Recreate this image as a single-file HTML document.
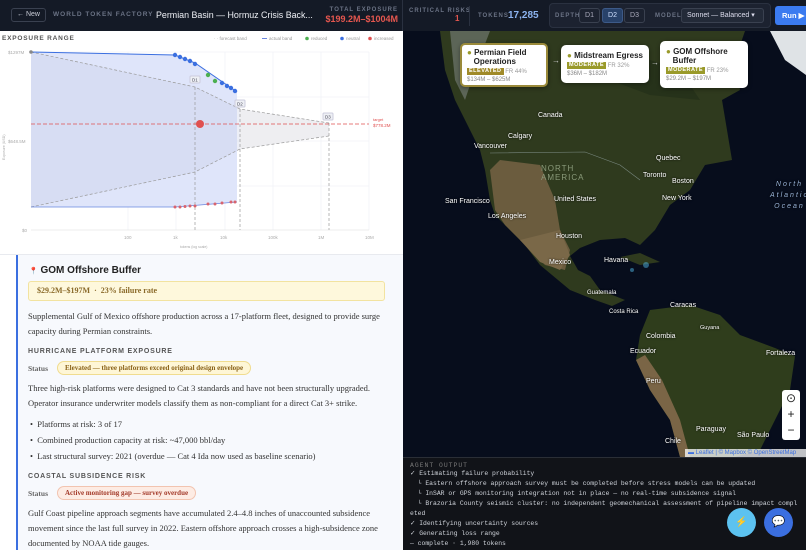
<!DOCTYPE html><html><head><meta charset="utf-8"><style>
*{margin:0;padding:0;box-sizing:border-box}
body{width:806px;height:550px;overflow:hidden;font-family:"Liberation Sans",sans-serif;background:#fff;position:relative}
.hdr{position:absolute;left:0;top:0;width:806px;height:31px;background:#141a26;color:#fff}
.abs{position:absolute;white-space:nowrap}
.lbl{font-size:6px;letter-spacing:1px;color:#6b7385;font-weight:bold}
.serif{font-family:"Liberation Serif",serif}
.mono{font-family:"Liberation Mono",monospace}
.card{position:absolute;background:#fff;border-radius:5px;box-shadow:0 1px 4px rgba(0,0,0,.4);color:#222}
.card .t{font-size:8px;font-weight:bold;line-height:9px}
.tag{display:inline-block;background:#9a9a2a;color:#fff;font-size:5.5px;font-weight:bold;padding:0 2px;letter-spacing:.5px;line-height:7px;vertical-align:middle}
.maplbl{position:absolute;color:#fff;font-size:7px;text-shadow:0 0 2px #000;white-space:nowrap}
</style></head><body>
<div class="hdr">
 <div class="abs" style="left:11px;top:8px;width:35px;height:14px;border:1px solid #3a4150;border-radius:3px;font-size:7px;color:#c8ccd6;text-align:center;line-height:12px">← New</div>
 <div class="abs" style="left:53px;top:11px;font-size:6.5px;letter-spacing:1px;color:#6b7385;font-weight:bold">WORLD TOKEN FACTORY</div>
 <div class="abs" style="left:156px;top:10px;font-size:8.9px;color:#eef0f5">Permian Basin — Hormuz Crisis Back...</div>
 <div class="abs lbl" style="right:408px;top:7px">TOTAL EXPOSURE</div>
 <div class="abs" style="right:408px;top:14px;font-size:9px;color:#e5574f;font-weight:bold">$199.2M–$1004M</div>
 <div class="abs" style="left:402px;top:0;width:1px;height:31px;background:#2a3140"></div>
 <div class="abs lbl" style="left:409px;top:8px">CRITICAL RISKS</div>
 <div class="abs" style="left:455px;top:14px;font-size:8px;color:#e5574f;font-weight:bold">1</div>
 <div class="abs" style="left:469px;top:6px;width:1px;height:20px;background:#2a3140"></div>
 <div class="abs lbl" style="left:478px;top:13px">TOKENS</div>
 <div class="abs" style="left:508px;top:10px;font-size:10px;color:#8db4f0;font-weight:bold">17,285</div>
 <div class="abs" style="left:549px;top:3px;width:222px;height:25px;background:#1c2230;border:1px solid #2a3140;border-radius:4px"></div>
 <div class="abs lbl" style="left:555px;top:13px">DEPTH</div>
 <div class="abs" style="left:579px;top:8px;width:21px;height:15px;border:1px solid #3a4150;border-radius:3px;font-size:7px;color:#aab;text-align:center;line-height:13px">D1</div>
 <div class="abs" style="left:602px;top:8px;width:21px;height:15px;background:#28426a;border:1px solid #3d5a88;border-radius:3px;font-size:7px;color:#cfe0ff;text-align:center;line-height:13px">D2</div>
 <div class="abs" style="left:624px;top:8px;width:21px;height:15px;border:1px solid #3a4150;border-radius:3px;font-size:7px;color:#aab;text-align:center;line-height:13px">D3</div>
 <div class="abs lbl" style="left:655px;top:13px">MODEL</div>
 <div class="abs" style="left:681px;top:8px;width:83px;height:15px;background:#232a38;border:1px solid #3a4150;border-radius:3px;font-size:7px;color:#dde;line-height:13px;padding-left:5px">Sonnet — Balanced ▾</div>
 <div class="abs" style="left:775px;top:6px;width:35px;height:19px;background:#3b7bf0;border-radius:3px;font-size:7.5px;color:#fff;line-height:19px;padding-left:7px;font-weight:bold">Run ▶</div>
</div>

<svg class="abs" style="left:0;top:31px" width="403" height="223" viewBox="0 31 403 223">
 <text x="2" y="40" font-size="6.5" font-weight="bold" fill="#555" letter-spacing="0.8" font-family="Liberation Sans">EXPOSURE RANGE</text>
 <g font-size="4.5" fill="#999" font-family="Liberation Sans">
  <text x="214" y="40">· · forecast band</text><line x1="262" y1="38.5" x2="267" y2="38.5" stroke="#6a86e0"/><text x="269" y="40">actual band</text>
  <circle cx="307" cy="38.5" r="1.8" fill="#4caf50"/><text x="311" y="40">reduced</text>
  <circle cx="342" cy="38.5" r="1.8" fill="#3b6fe0"/><text x="346" y="40">neutral</text>
  <circle cx="370" cy="38.5" r="1.8" fill="#e05050"/><text x="374" y="40">increased</text>
 </g>
 <g stroke="#eceef3" stroke-width="0.6">
  <line x1="31" y1="52" x2="369" y2="52"/><line x1="31" y1="97" x2="369" y2="97"/><line x1="31" y1="141" x2="369" y2="141"/><line x1="31" y1="186" x2="369" y2="186"/>
  <line x1="128" y1="52" x2="128" y2="230"/><line x1="176" y1="52" x2="176" y2="230"/><line x1="225" y1="52" x2="225" y2="230"/><line x1="273" y1="52" x2="273" y2="230"/><line x1="321" y1="52" x2="321" y2="230"/><line x1="369" y1="52" x2="369" y2="230"/>
 </g>
 <line x1="31" y1="230" x2="369" y2="230" stroke="#ddd" stroke-width="0.6"/>
 <polygon points="31,52 175,55 195,63 237,92 237,202 175,207 31,207" fill="#dfe5fa"/>
 <polygon points="31,52 195,87 240,109 329,123 329,136 240,149 195,172 31,207" fill="#c9cde6" opacity="0.35"/>
 <polygon points="240,109 329,123 329,136 240,149" fill="#eeeef1"/>
 <g fill="none" stroke="#999" stroke-width="0.7" stroke-dasharray="3,2">
  <polyline points="31,52 195,87 240,109 329,123"/><polyline points="31,207 195,172 240,149 329,136"/>
  <line x1="195" y1="87" x2="195" y2="230"/><line x1="240" y1="109" x2="240" y2="230"/><line x1="329" y1="123" x2="329" y2="230"/>
 </g>
 <line x1="31" y1="124" x2="369" y2="124" stroke="#e05050" stroke-width="0.8" stroke-dasharray="4,2"/>
 <polyline points="31,52 175,55 195,63 237,92" fill="none" stroke="#3b6fe0" stroke-width="1"/>
 <polyline points="31,207 175,207 237,202" fill="none" stroke="#6a86e0" stroke-width="0.8"/>
 <g fill="#3b6fe0"><circle cx="175" cy="55" r="2.2"/><circle cx="180" cy="57" r="2.2"/><circle cx="185" cy="59" r="2.2"/><circle cx="190" cy="61" r="2.2"/><circle cx="195" cy="64" r="2.2"/><circle cx="222" cy="83" r="2.2"/><circle cx="227" cy="86" r="2.2"/><circle cx="231" cy="88" r="2.2"/><circle cx="235" cy="91" r="2.2"/></g>
 <g fill="#4caf50"><circle cx="208" cy="75" r="2.2"/><circle cx="215" cy="81" r="2.2"/></g>
 <g fill="#d9646e"><circle cx="175" cy="207" r="1.5"/><circle cx="180" cy="207" r="1.5"/><circle cx="185" cy="206.5" r="1.5"/><circle cx="190" cy="206" r="1.5"/><circle cx="195" cy="206" r="1.5"/><circle cx="208" cy="204" r="1.5"/><circle cx="215" cy="204" r="1.5"/><circle cx="222" cy="203" r="1.5"/><circle cx="231" cy="202" r="1.5"/><circle cx="235" cy="202" r="1.5"/></g>
 <circle cx="200" cy="124" r="4" fill="#e05050"/>
 <circle cx="31" cy="52" r="1.8" fill="#888"/>
 <g font-size="4.5" fill="#445" font-family="Liberation Sans">
  <rect x="190" y="76" width="10" height="7" rx="1" fill="#eef0f5" stroke="#ccd"/><text x="192" y="81.5">D1</text>
  <rect x="235" y="100" width="10" height="7" rx="1" fill="#eef0f5" stroke="#ccd"/><text x="237" y="105.5">D2</text>
  <rect x="323" y="113" width="10" height="7" rx="1" fill="#eef0f5" stroke="#ccd"/><text x="325" y="118.5">D3</text>
 </g>
 <g font-size="4.5" fill="#aaa" font-family="Liberation Sans">
  <text x="8" y="54">$1297M</text><text x="8" y="143">$648.5M</text><text x="22" y="232">$0</text>
  <text x="124" y="239">100</text><text x="173" y="239">1k</text><text x="220" y="239">10k</text><text x="268" y="239">100k</text><text x="318" y="239">1M</text><text x="365" y="239">10M</text>
  <text x="180" y="248" font-size="3.5">tokens (log scale)</text>
  <text x="373" y="121" fill="#e05050" font-size="4">target</text><text x="373" y="127" fill="#e05050">$778.2M</text>
  <text transform="translate(5,160) rotate(-90)" font-size="3.5">Exposure (USD)</text>
 </g>
</svg>
<div class="abs" style="left:0;top:254px;width:403px;height:1px;background:#e8eaef"></div>
<div class="abs" style="left:16px;top:255px;width:387px;height:295px;background:#f7f9fd;border-left:2px solid #3b6fe0"></div>
<div class="abs" style="left:29px;top:265px;font-size:10px;font-weight:bold;color:#222"><span style="color:#d9534f;font-size:7px">📍</span> GOM Offshore Buffer</div>
<div class="abs serif" style="left:28px;top:281px;width:357px;height:20px;background:#fef8dc;border:1px solid #f2e3a0;border-radius:3px;font-size:8px;font-weight:bold;color:#8a6a2a;line-height:18px;padding-left:8px">$29.2M–$197M &nbsp;·&nbsp; 23% failure rate</div>
<div class="abs serif" style="left:28px;top:309px;width:365px;font-size:8.5px;line-height:15px;color:#333;white-space:normal">Supplemental Gulf of Mexico offshore production across a 17-platform fleet, designed to provide surge capacity during Permian constraints.</div>
<div class="abs" style="left:28px;top:348px;font-size:7px;font-weight:bold;letter-spacing:.8px;color:#555">HURRICANE PLATFORM EXPOSURE</div>
<div class="abs serif" style="left:28px;top:364px;font-size:7.5px;color:#666;font-weight:bold">Status</div>
<div class="abs serif" style="left:57px;top:361px;height:14px;padding:0 7px;background:#fef6d6;border:1px solid #f0dc8f;border-radius:7px;font-size:7px;font-weight:bold;color:#8a6218;line-height:12px">Elevated — three platforms exceed original design envelope</div>
<div class="abs serif" style="left:28px;top:381px;width:365px;font-size:8.5px;line-height:15px;color:#333;white-space:normal">Three high-risk platforms were designed to Cat 3 standards and have not been structurally upgraded. Operator insurance underwriter models classify them as non-compliant for a direct Cat 3+ strike.</div>
<div class="abs serif" style="left:30px;top:416px;font-size:8.5px;line-height:16px;color:#333">• &nbsp;Platforms at risk: 3 of 17<br>• &nbsp;Combined production capacity at risk: ~47,000 bbl/day<br>• &nbsp;Last structural survey: 2021 (overdue — Cat 4 Ida now used as baseline scenario)</div>
<div class="abs" style="left:28px;top:473px;font-size:7px;font-weight:bold;letter-spacing:.8px;color:#555">COASTAL SUBSIDENCE RISK</div>
<div class="abs serif" style="left:28px;top:489px;font-size:7.5px;color:#666;font-weight:bold">Status</div>
<div class="abs serif" style="left:57px;top:486px;height:14px;padding:0 7px;background:#fdece4;border:1px solid #f2c4b0;border-radius:7px;font-size:7px;font-weight:bold;color:#a33a2a;line-height:12px">Active monitoring gap — survey overdue</div>
<div class="abs serif" style="left:28px;top:506px;width:365px;font-size:8.5px;line-height:15px;color:#333;white-space:normal">Gulf Coast pipeline approach segments have accumulated 2.4–4.8 inches of unaccounted subsidence movement since the last full survey in 2022. Eastern offshore approach crosses a high-subsidence zone documented by NOAA tide gauges.</div>

<svg class="abs" style="left:403px;top:31px" width="403" height="426" viewBox="403 31 403 426">
 <rect x="403" y="31" width="403" height="426" fill="#070d1c"/>
 <polygon points="440,31 745,31 735,60 740,90 722,100 732,160 705,165 690,190 670,205 655,230 640,245 625,238 600,240 580,248 570,256 578,270 590,276 600,290 625,300 612,306 595,300 570,290 540,265 525,245 505,225 495,215 490,200 485,170 480,150 470,130 455,100 445,70" fill="#2f3a1e"/>
 <polygon points="490,170 500,160 540,165 555,200 560,230 570,250 565,270 545,265 525,245 505,225 495,210" fill="#6b5c3e"/>
 <polygon points="520,240 560,230 570,255 560,270 540,262" fill="#7a6848"/>
 <polygon points="560,60 620,50 680,70 700,100 650,95 610,80" fill="#26321a"/>
 <polygon points="450,31 490,31 475,70 465,100 455,80" fill="#8a9090" opacity="0.5"/>
 <polygon points="770,31 806,31 806,75 785,60" fill="#dfe3e6"/>
 <polygon points="650,310 690,305 720,315 740,335 775,348 795,356 790,390 775,420 760,450 735,457 680,457 670,420 650,390 636,360 640,335" fill="#2f3d1c"/>
 <polygon points="636,360 650,390 670,420 680,457 690,457 680,420 662,380 645,355" fill="#7a6546"/>
 <polygon points="620,257 640,253 660,262 640,265" fill="#2f3a1e"/>
 <g fill="#4fb3e0" opacity="0.5"><circle cx="646" cy="265" r="3"/><circle cx="632" cy="270" r="2"/></g>
 <polyline points="490,153 585,152 620,165 640,180" fill="none" stroke="#9aa" stroke-width="0.6" opacity="0.7"/>
</svg>
<div class="maplbl" style="left:538px;top:112px">Canada</div>
<div class="maplbl" style="left:508px;top:133px">Calgary</div>
<div class="maplbl" style="left:474px;top:143px">Vancouver</div>
<div class="maplbl" style="left:541px;top:164px;color:#8a9a7a;font-size:8px;letter-spacing:1px;text-shadow:none">NORTH<br>AMERICA</div>
<div class="maplbl" style="left:554px;top:196px">United States</div>
<div class="maplbl" style="left:656px;top:155px">Quebec</div>
<div class="maplbl" style="left:643px;top:172px">Toronto</div>
<div class="maplbl" style="left:672px;top:178px">Boston</div>
<div class="maplbl" style="left:662px;top:195px">New York</div>
<div class="maplbl" style="left:445px;top:198px">San Francisco</div>
<div class="maplbl" style="left:488px;top:213px">Los Angeles</div>
<div class="maplbl" style="left:556px;top:233px">Houston</div>
<div class="maplbl" style="left:549px;top:259px">Mexico</div>
<div class="maplbl" style="left:604px;top:257px">Havana</div>
<div class="maplbl" style="left:587px;top:290px;font-size:6px">Guatemala</div>
<div class="maplbl" style="left:609px;top:309px;font-size:6px">Costa Rica</div>
<div class="maplbl" style="left:670px;top:302px">Caracas</div>
<div class="maplbl" style="left:700px;top:325px;font-size:5.5px">Guyana</div>
<div class="maplbl" style="left:646px;top:333px">Colombia</div>
<div class="maplbl" style="left:630px;top:348px">Ecuador</div>
<div class="maplbl" style="left:646px;top:378px">Peru</div>
<div class="maplbl" style="left:766px;top:350px">Fortaleza</div>
<div class="maplbl" style="left:696px;top:426px">Paraguay</div>
<div class="maplbl" style="left:737px;top:432px">São Paulo</div>
<div class="maplbl" style="left:665px;top:438px">Chile</div>
<div class="maplbl" style="left:770px;top:179px;color:#9ab4d8;font-style:italic;letter-spacing:2px;text-align:center;line-height:11px">North<br>Atlantic<br>Ocean</div>
<div class="abs" style="left:782px;top:390px;width:18px;height:50px;background:#fff;border-radius:3px;font-size:12px;color:#222;text-align:center;line-height:16px">⊙<br>+<br>−</div>
<div class="abs" style="left:685px;top:449px;width:121px;height:8px;background:rgba(255,255,255,.75);font-size:6px;color:#3b6fe0;line-height:8px;padding-left:3px">▬ Leaflet | © Mapbox © OpenStreetMap</div>

<div class="card" style="left:460px;top:43px;width:88px;height:44px;border:2px solid #9a8a3a">
 <div class="t" style="position:absolute;left:5px;top:3px"><span style="color:#9a9a2a">●</span> Permian Field<br>&nbsp;&nbsp;&nbsp;Operations</div>
 <div style="position:absolute;left:5px;top:23px;font-size:6px;color:#999"><span class="tag" style="background:#a08a28">ELEVATED</span> FR 44%</div>
 <div style="position:absolute;left:5px;top:32px;font-size:6px;color:#888">$134M – $625M</div>
</div>
<div class="abs" style="left:552px;top:56px;color:#ccc;font-size:8px">→</div>
<div class="card" style="left:561px;top:45px;width:88px;height:38px">
 <div class="t" style="position:absolute;left:6px;top:6px"><span style="color:#9a9a2a">●</span> Midstream Egress</div>
 <div style="position:absolute;left:6px;top:17px;font-size:6px;color:#999"><span class="tag">MODERATE</span> FR 32%</div>
 <div style="position:absolute;left:6px;top:26px;font-size:6px;color:#888">$36M – $182M</div>
</div>
<div class="abs" style="left:651px;top:58px;color:#ccc;font-size:8px">→</div>
<div class="card" style="left:660px;top:41px;width:88px;height:47px">
 <div class="t" style="position:absolute;left:6px;top:6px"><span style="color:#9a9a2a">●</span> GOM Offshore<br>&nbsp;&nbsp;&nbsp;Buffer</div>
 <div style="position:absolute;left:6px;top:26px;font-size:6px;color:#999"><span class="tag">MODERATE</span> FR 23%</div>
 <div style="position:absolute;left:6px;top:35px;font-size:6px;color:#888">$29.2M – $197M</div>
</div>

<div class="abs mono" style="left:403px;top:457px;width:403px;height:93px;background:#111318;border-top:1px solid #2a2e36;color:#cfd3da;font-size:6.4px;line-height:10px;padding-left:7px;white-space:pre"><div style="color:#777;letter-spacing:1px;margin-top:3px;line-height:9px">AGENT OUTPUT</div><div style="height:9px;overflow:hidden;line-height:3px;padding-top:2px">✓ Estimating failure probability</div>  └ Eastern offshore approach survey must be completed before stress models can be updated
  └ InSAR or GPS monitoring integration not in place — no real-time subsidence signal
  └ Brazoria County seismic cluster: no independent geomechanical assessment of pipeline impact compl
eted
✓ Identifying uncertainty sources
✓ Generating loss range
— complete · 1,980 tokens</div>
<div class="abs" style="left:727px;top:508px;width:29px;height:29px;border-radius:50%;background:#5cc2f0;color:#f5d142;font-size:10px;text-align:center;line-height:29px">⚡</div>
<div class="abs" style="left:764px;top:508px;width:29px;height:29px;border-radius:50%;background:#3b6fe0;color:#fff;font-size:11px;text-align:center;line-height:29px">💬</div>
</body></html>
